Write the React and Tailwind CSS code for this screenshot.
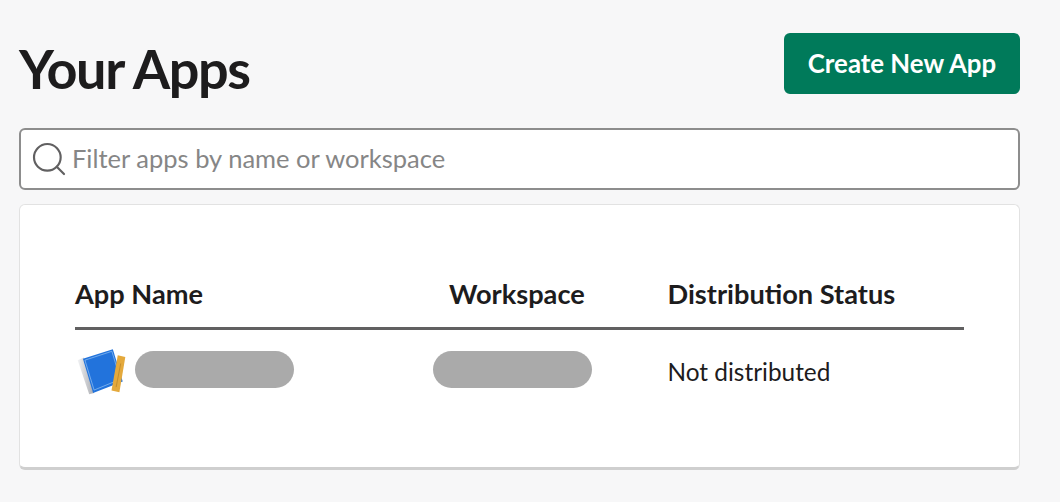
import { Search } from 'lucide-react';

function AppIcon() {
  return (
    <svg width="49" height="46" viewBox="52 56 147 140" className="ml-[2px] shrink-0">
      <defs>
        <linearGradient id="pages" x1="0" y1="0" x2="1" y2="0">
          <stop offset="0" stopColor="#f2f3f5" />
          <stop offset="1" stopColor="#a9abb0" />
        </linearGradient>
      </defs>
      <polygon points="53,90 72,82 103,190 88,194" fill="url(#pages)" />
      <polygon points="69,86 160,57 190,155 100,190" fill="#2273dc" />
      <polygon points="75,90 157,63 183,148 103,181" fill="none" stroke="#9cc8f4" strokeWidth="2" />
      <polygon points="175,75 198,80 180,188 156,182" fill="#e4a93c" />
      <line x1="184" y1="100" x2="170" y2="172" stroke="#b37f25" strokeWidth="2" />
    </svg>
  );
}

function Redacted() {
  return <div className="mb-[5px] h-[37px] w-[159px] rounded-full bg-[#aaaaaa]" />;
}

export default function App() {
  return (
    <div className="h-[502px] w-[1060px] overflow-hidden bg-[#f7f7f8] px-[19px] pt-[33px] font-['Lato',sans-serif] text-[#1d1c1d]">
      <div className="mr-[21px] flex items-start justify-between">
        <h1 className="text-[54px] leading-[71px] font-bold tracking-[-1.4px]">Your Apps</h1>
        <button className="h-[61px] w-[236px] rounded-[6px] bg-[#007a5a] text-[25.8px] font-bold text-white">
          Create New App
        </button>
      </div>

      <div className="mt-[24px] mr-[21px] flex h-[62px] items-center rounded-[6px] border-2 border-[#8d8d8d] bg-white pl-[8px]">
        <Search size={40} strokeWidth={1.3} className="shrink-0 text-[#616061]" />
        <span className="mb-[2px] ml-[3px] text-[25.5px] text-[#868686]">Filter apps by name or workspace</span>
      </div>

      <div className="mt-[14px] mr-[21px] h-[266px] rounded-[6px] border border-[#e2e2e2] border-b-[3px] border-b-[#cfcfcf] bg-white px-[55px] pt-[68px]">
        <div className="flex h-[57px] items-start border-b-[3px] border-[#616061] text-[27.2px] leading-[42px] font-bold">
          <div className="w-[374px]">App Name</div>
          <div className="w-[218.5px]">Workspace</div>
          <div>Distribution Status</div>
        </div>
        <div className="flex h-[84px] items-center text-[24.4px]">
          <div className="flex w-[358px] items-center">
            <AppIcon />
            <div className="ml-[9px]"><Redacted /></div>
          </div>
          <div className="w-[234.5px]"><Redacted /></div>
          <div>Not distributed</div>
        </div>
      </div>
    </div>
  );
}
